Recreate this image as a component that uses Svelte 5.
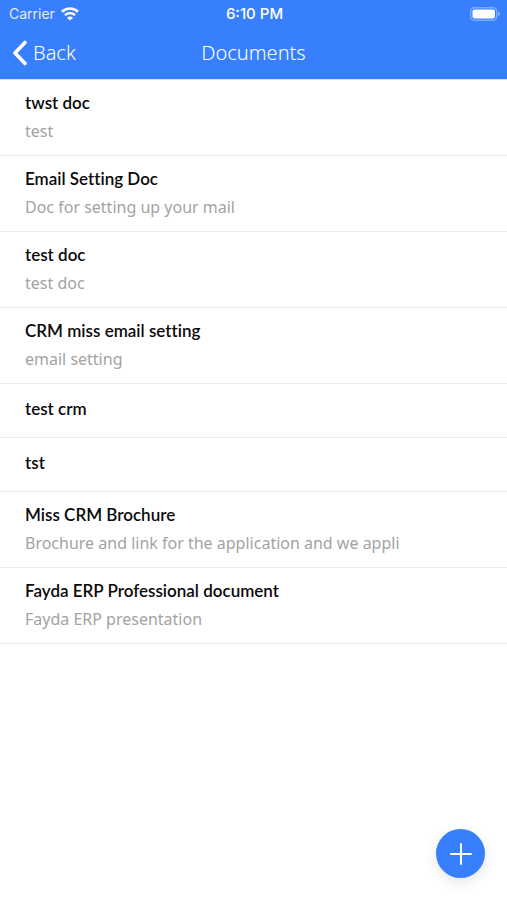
<script lang="ts">
	type Doc = { title: string; description?: string };

	let documents: Doc[] = [
		{ title: 'twst doc', description: 'test' },
		{ title: 'Email Setting Doc', description: 'Doc for setting up your mail' },
		{ title: 'test doc', description: 'test doc' },
		{ title: 'CRM miss email setting', description: 'email setting' },
		{ title: 'test crm' },
		{ title: 'tst' },
		{
			title: 'Miss CRM Brochure',
			description: 'Brochure and link for the application and we appli'
		},
		{ title: 'Fayda ERP Professional document', description: 'Fayda ERP presentation' }
	];
</script>

<div class="screen">
	<header>
		<div class="status-bar">
			<div class="carrier">
				<span>Carrier</span>
				<svg width="18" height="14" viewBox="0 0 18 14" fill="none" stroke="#fff" aria-hidden="true">
					<path d="M1 4.8C5.5.4 12.5.4 17 4.8" stroke-width="2.6" />
					<path d="M4 8.2C6.8 5.4 11.2 5.4 14 8.2" stroke-width="2.4" />
					<path d="M9 13.6 6 10.7C7.7 9.1 10.3 9.1 12 10.7Z" fill="#fff" stroke="none" />
				</svg>
			</div>
			<span class="time">6:10 PM</span>
			<svg class="battery" width="30" height="14" viewBox="0 0 30 14" aria-hidden="true">
				<rect x="0.7" y="0.7" width="26" height="12.6" rx="3.5" fill="none" stroke="#fff" stroke-opacity="0.35" stroke-width="1.4" />
				<rect x="2.5" y="2.5" width="22.5" height="9" rx="2" fill="#fff" />
				<path d="M28 4.8C30.3 5.4 30.3 8.6 28 9.2Z" fill="#fff" fill-opacity="0.4" />
			</svg>
		</div>
		<nav class="toolbar">
			<button class="back">
				<svg width="16" height="26" viewBox="0 0 16 26" aria-hidden="true">
					<path d="M13 2.5 3 13 13 23.5" fill="none" stroke="#fff" stroke-width="3.6" stroke-linecap="round" stroke-linejoin="round" />
				</svg>
				<span>Back</span>
			</button>
			<h1>Documents</h1>
		</nav>
	</header>

	<main>
		<ul>
			{#each documents as doc}
				<li>
					<h2>{doc.title}</h2>
					{#if doc.description}
						<p>{doc.description}</p>
					{/if}
				</li>
			{/each}
		</ul>
	</main>

	<button class="fab" aria-label="Add document">
		<svg width="22" height="22" viewBox="0 0 22 22" aria-hidden="true">
			<path d="M11 1V21M1 11H21" stroke="#fff" stroke-width="2" stroke-linecap="round" />
		</svg>
	</button>
</div>

<style>
	:global(body) {
		background: #fff;
	}

	.screen {
		min-height: 100vh;
		font-family: 'Noto Sans', sans-serif;
	}

	header {
		border-bottom: 1px solid #cfe0fc;
		background: #387ffd;
		color: #fff;
	}

	/* Status bar */
	.status-bar {
		display: grid;
		grid-template-columns: 1fr auto 1fr;
		align-items: center;
		height: 27px;
		padding: 0 7px 0 9px;
		font-family: Inter, sans-serif;
		font-size: 14px;
	}

	.carrier {
		display: flex;
		align-items: center;
		gap: 6px;
		color: #e4edff;
	}

	.time {
		font-size: 15px;
		font-weight: 500;
	}

	.battery {
		justify-self: end;
	}

	/* Toolbar */
	.toolbar {
		display: grid;
		grid-template-columns: 1fr auto 1fr;
		align-items: center;
		height: 52px;
		padding: 0 12px;
		box-sizing: border-box;
	}

	.back {
		display: flex;
		align-items: center;
		justify-self: start;
		gap: 5px;
		padding: 0;
		border: none;
		background: none;
		color: inherit;
		font-family: inherit;
		font-size: 20px;
		font-weight: 300;
		line-height: 28px;
		cursor: pointer;
	}

	h1 {
		margin: 0;
		font-size: 20px;
		font-weight: 300;
		line-height: 28px;
	}

	/* Document list */
	ul {
		margin: 0;
		padding: 0;
		list-style: none;
	}

	li {
		padding: 11px 25px 8px;
		border-bottom: 1px solid #ebebeb;
	}

	li h2 {
		margin: 0;
		color: #0a0a0a;
		font-family: Lato, sans-serif;
		font-size: 17px;
		font-weight: 600;
		font-variant-ligatures: none;
		line-height: 24px;
	}

	li p {
		margin: 0;
		color: #a3a3a3;
		font-size: 16px;
		line-height: 32px;
	}

	/* Rows without a description */
	li h2:only-child {
		margin-bottom: 6px;
		line-height: 28px;
	}

	.fab {
		position: fixed;
		right: 22px;
		bottom: 22px;
		display: flex;
		align-items: center;
		justify-content: center;
		width: 49px;
		height: 49px;
		padding: 0;
		border: none;
		border-radius: 50%;
		background: #387ffd;
		box-shadow: 0 4px 14px rgba(0, 0, 0, 0.1);
		cursor: pointer;
	}
</style>
